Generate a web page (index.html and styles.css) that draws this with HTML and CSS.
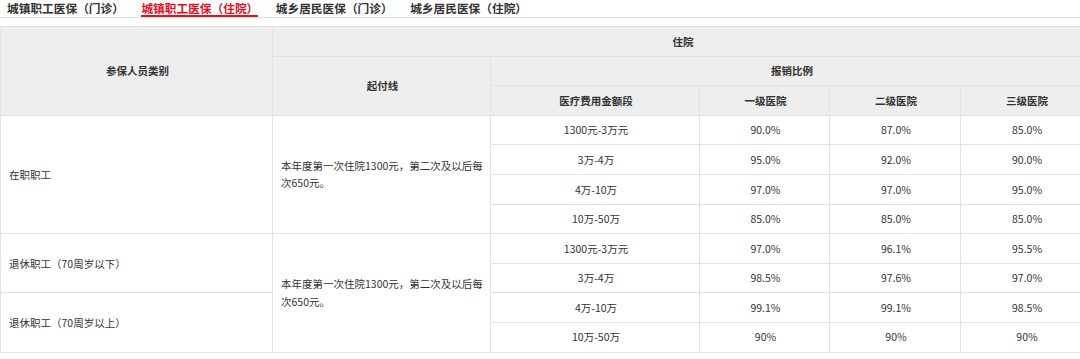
FILE: index.html
```html
<!DOCTYPE html>
<html lang="zh-CN">
<head>
<meta charset="utf-8">
<title>医保报销比例</title>
<link rel="stylesheet" href="styles.css">
</head>
<body>
<div class="page">
  <nav class="tabs">
    <span class="tab">城镇职工医保（门诊）</span>
    <span class="tab active">城镇职工医保（住院）</span>
    <span class="tab">城乡居民医保（门诊）</span>
    <span class="tab">城乡居民医保（住院）</span>
  </nav>
  <table class="grid">
    <colgroup>
      <col class="c1"><col class="c2"><col class="c3"><col class="c4"><col class="c5"><col class="c6">
    </colgroup>
    <thead>
      <tr>
        <th rowspan="3">参保人员类别</th>
        <th colspan="5">住院</th>
      </tr>
      <tr>
        <th rowspan="2">起付线</th>
        <th colspan="4">报销比例</th>
      </tr>
      <tr>
        <th>医疗费用金额段</th>
        <th>一级医院</th>
        <th>二级医院</th>
        <th>三级医院</th>
      </tr>
    </thead>
    <tbody>
      <tr>
        <td rowspan="4" class="left">在职职工</td>
        <td rowspan="4" class="left">本年度第一次住院1300元，第二次及以后每次650元。</td>
        <td>1300元-3万元</td><td>90.0%</td><td>87.0%</td><td>85.0%</td>
      </tr>
      <tr><td>3万-4万</td><td>95.0%</td><td>92.0%</td><td>90.0%</td></tr>
      <tr><td>4万-10万</td><td>97.0%</td><td>97.0%</td><td>95.0%</td></tr>
      <tr><td>10万-50万</td><td>85.0%</td><td>85.0%</td><td>85.0%</td></tr>
      <tr>
        <td rowspan="2" class="left">退休职工（70周岁以下）</td>
        <td rowspan="4" class="left">本年度第一次住院1300元，第二次及以后每次650元。</td>
        <td>1300元-3万元</td><td>97.0%</td><td>96.1%</td><td>95.5%</td>
      </tr>
      <tr><td>3万-4万</td><td>98.5%</td><td>97.6%</td><td>97.0%</td></tr>
      <tr>
        <td rowspan="2" class="left">退休职工（70周岁以上）</td>
        <td>4万-10万</td><td>99.1%</td><td>99.1%</td><td>98.5%</td>
      </tr>
      <tr><td>10万-50万</td><td>90%</td><td>90%</td><td>90%</td></tr>
    </tbody>
  </table>
</div>
</body>
</html>
```

FILE: styles.css
```css
html, body {
  margin: 0;
  padding: 0;
  background: #fff;
  overflow: hidden;
}

.page {
  width: 1080px;
  font-family: "Noto Sans CJK SC", "Noto Sans", sans-serif;
  color: #333;
}

.tabs {
  display: flex;
  gap: 17.5px;
  padding-left: 7px;
  border-bottom: 1px solid #dedede;
}

.tab {
  font-size: 11.7px;
  font-weight: bold;
  line-height: 15px;
  color: #333;
  border-bottom: 2px solid transparent;
  white-space: nowrap;
}

.tab.active {
  color: #e0101c;
  border-bottom-color: #e0101c;
}

.grid {
  margin-top: 8px;
  width: 1091px;
  table-layout: fixed;
  border-collapse: collapse;
  font-size: 10.5px;
}

.c1 { width: 272px; }
.c2 { width: 218px; }
.c3 { width: 209px; }
.c4 { width: 130px; }
.c5 { width: 131px; }
.c6 { width: 131px; }

.grid th,
.grid td {
  border: 1px solid #e2e2e2;
  height: 28.6px;
  padding: 0 6px 0 8px;
  text-align: center;
  vertical-align: middle;
  line-height: 17.5px;
}

.grid th {
  background: #eeeeee;
  font-weight: bold;
  color: #333;
}

.grid td {
  background: #fff;
  color: #333;
}

.grid td.left {
  text-align: left;
}
```
